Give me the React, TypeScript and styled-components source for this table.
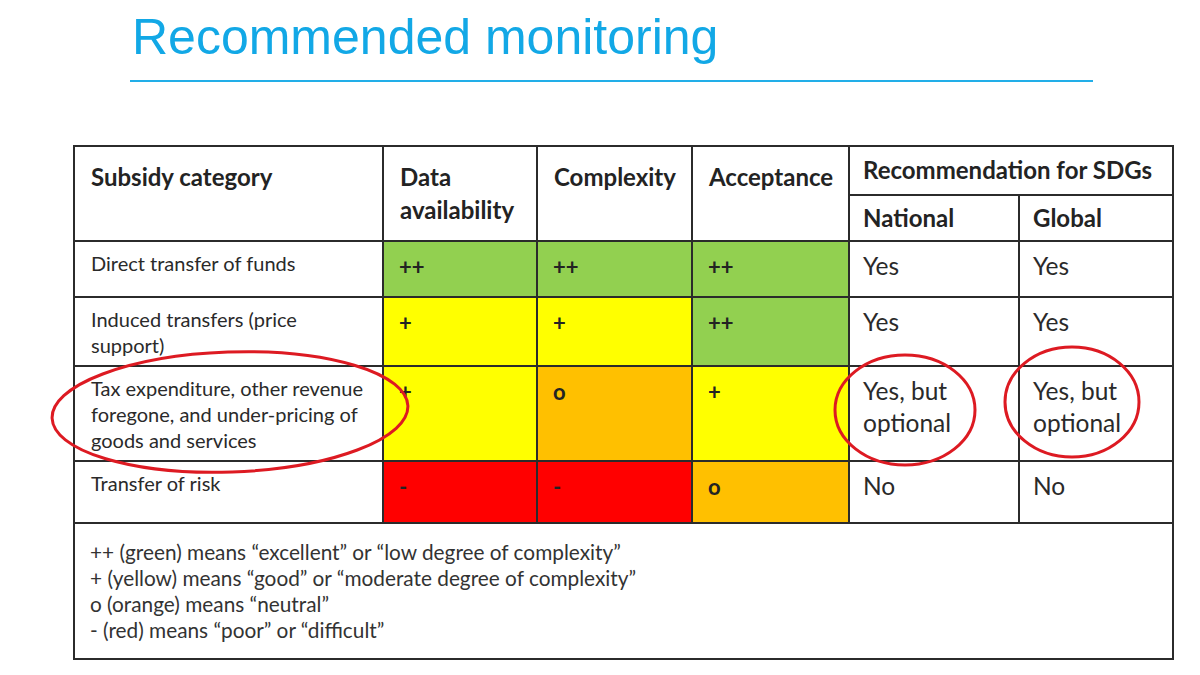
import React from 'react';
import styled, { createGlobalStyle } from 'styled-components';

type Level = 'green' | 'yellow' | 'orange' | 'red';

interface Row {
  category: string;
  height: number;
  data: [Level, string];
  complexity: [Level, string];
  acceptance: [Level, string];
  national: string;
  global: string;
}

const fills: Record<Level, string> = {
  green: '#92d050',
  yellow: '#ffff00',
  orange: '#ffc000',
  red: '#ff0000',
};

const columns = [309, 154, 155, 157, 170, 154];

const rows: Row[] = [
  {
    category: 'Direct transfer of funds',
    height: 56,
    data: ['green', '++'],
    complexity: ['green', '++'],
    acceptance: ['green', '++'],
    national: 'Yes',
    global: 'Yes',
  },
  {
    category: 'Induced transfers (price support)',
    height: 69,
    data: ['yellow', '+'],
    complexity: ['yellow', '+'],
    acceptance: ['green', '++'],
    national: 'Yes',
    global: 'Yes',
  },
  {
    category: 'Tax expenditure, other revenue foregone, and under-pricing of goods and services',
    height: 95,
    data: ['yellow', '+'],
    complexity: ['orange', 'o'],
    acceptance: ['yellow', '+'],
    national: 'Yes, but optional',
    global: 'Yes, but optional',
  },
  {
    category: 'Transfer of risk',
    height: 62,
    data: ['red', '-'],
    complexity: ['red', '-'],
    acceptance: ['orange', 'o'],
    national: 'No',
    global: 'No',
  },
];

const legend = [
  '++ (green) means \u201cexcellent\u201d or \u201clow degree of complexity\u201d',
  '+ (yellow) means \u201cgood\u201d or \u201cmoderate degree of complexity\u201d',
  'o (orange) means \u201cneutral\u201d',
  '- (red) means \u201cpoor\u201d or \u201cdifficult\u201d',
];

const App: React.FC = () => {
  const renderScore = ([level, mark]: [Level, string], key: string) => (
    <ScoreCell key={key} $fill={fills[level]}>
      {mark}
    </ScoreCell>
  );

  return (
    <Slide>
      <GlobalStyle />
      <Title>Recommended monitoring</Title>
      <Rule />
      <Table>
        <colgroup>
          {columns.map((w, i) => (
            <Col key={i} $w={w} />
          ))}
        </colgroup>
        <thead>
          <Row $h={49}>
            <HeadCell rowSpan={2}>Subsidy category</HeadCell>
            <HeadCell rowSpan={2}>
              Data
              <br />
              availability
            </HeadCell>
            <HeadCell rowSpan={2}>Complexity</HeadCell>
            <HeadCell rowSpan={2}>Acceptance</HeadCell>
            <GroupHead colSpan={2}>Recommendation for SDGs</GroupHead>
          </Row>
          <Row $h={46}>
            <SubHead>National</SubHead>
            <SubHead>Global</SubHead>
          </Row>
        </thead>
        <tbody>
          {rows.map((row) => (
            <Row key={row.category} $h={row.height}>
              <CategoryCell>{row.category}</CategoryCell>
              {renderScore(row.data, 'data')}
              {renderScore(row.complexity, 'complexity')}
              {renderScore(row.acceptance, 'acceptance')}
              <AnswerCell>{row.national}</AnswerCell>
              <AnswerCell>{row.global}</AnswerCell>
            </Row>
          ))}
          <Row $h={136}>
            <LegendCell colSpan={6}>
              {legend.map((line) => (
                <LegendLine key={line}>{line}</LegendLine>
              ))}
            </LegendCell>
          </Row>
        </tbody>
      </Table>
      <Marks width="1200" height="675" viewBox="0 0 1200 675">
        <ellipse cx="230" cy="412" rx="178" ry="60" transform="rotate(-2 230 412)" />
        <ellipse cx="905" cy="410" rx="70" ry="55" />
        <ellipse cx="1072" cy="402" rx="67" ry="55" />
      </Marks>
    </Slide>
  );
};

const GlobalStyle = createGlobalStyle`
  html, body {
    margin: 0;
    padding: 0;
    background: #ffffff;
  }
`;

const Slide = styled.div`
  position: relative;
  width: 1200px;
  height: 675px;
  overflow: hidden;
  background: #ffffff;
  font-family: Lato, 'Open Sans', sans-serif;
  color: #232323;
`;

const Title = styled.h1`
  margin: 12px 0 0 132px;
  font-family: 'Liberation Sans', Arial, sans-serif;
  font-weight: 400;
  font-size: 50px;
  line-height: 50px;
  color: #12a8e6;
`;

const Rule = styled.div`
  margin: 18px 0 0 130px;
  width: 963px;
  height: 2px;
  background: #22aee8;
`;

const Table = styled.table`
  margin: 63px 0 0 73px;
  width: 1099px;
  table-layout: fixed;
  border-collapse: collapse;
  border: 2px solid #2b2b2b;

  td,
  th {
    border: 2px solid #2b2b2b;
    vertical-align: top;
  }
`;

const Col = styled.col<{ $w: number }>`
  width: ${(p) => p.$w}px;
`;

const Row = styled.tr<{ $h: number }>`
  height: ${(p) => p.$h}px;
`;

const HeadCell = styled.th`
  padding: 13px 6px 0 16px;
  text-align: left;
  font-weight: 700;
  font-size: 24px;
  line-height: 33px;
  white-space: nowrap;
`;

const GroupHead = styled.th`
  padding: 8px 4px 0 13px;
  text-align: left;
  font-weight: 700;
  font-size: 24px;
  line-height: 30px;
  white-space: nowrap;
`;

const SubHead = styled.th`
  padding: 7px 13px 0;
  text-align: left;
  font-weight: 700;
  font-size: 24px;
  line-height: 30px;
`;

const CategoryCell = styled.td`
  padding: 8px 12px 0 16px;
  font-size: 20px;
  line-height: 26px;
  color: #2a2a2a;
`;

const ScoreCell = styled.td<{ $fill: string }>`
  padding: 12px 15px 0;
  background: ${(p) => p.$fill};
  font-size: 22px;
  font-weight: 700;
  line-height: 26px;
`;

const AnswerCell = styled.td`
  padding: 8px 13px 0;
  font-size: 24.5px;
  line-height: 32px;
  color: #2a2a2a;
`;

const LegendCell = styled.td`
  padding: 15px 15px 0;
`;

const LegendLine = styled.div`
  font-size: 20.8px;
  line-height: 26px;
  color: #333333;
`;

const Marks = styled.svg`
  position: absolute;
  left: 0;
  top: 0;
  pointer-events: none;

  ellipse {
    fill: none;
    stroke: #dd1a22;
    stroke-width: 3;
  }
`;

export default App;
